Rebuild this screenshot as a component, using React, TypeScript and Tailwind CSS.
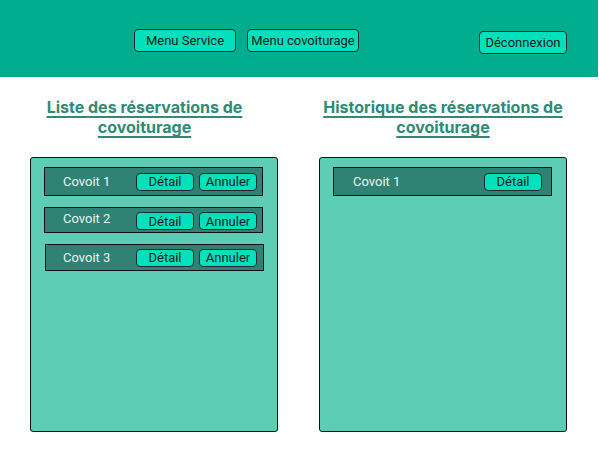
import React from 'react'

const font = { fontFamily: 'Inter, "Liberation Sans", sans-serif' }
const small = { fontFamily: 'Roboto, "Liberation Sans", sans-serif' }

function HeaderButton({ label, width }: { label: string; width: string }) {
  return (
    <button
      style={small}
      className={`${width} h-[23px] whitespace-nowrap rounded-[4px] border border-[#1b2b27] bg-[#00e0bb] text-[13px] leading-none text-[#10211d]`}
    >
      {label}
    </button>
  )
}

function SmallButton({ label }: { label: string }) {
  return (
    <button
      style={small}
      className="h-[18px] w-[58px] whitespace-nowrap rounded-[4px] border border-[#1b2b27] bg-[#00e0bb] text-[13px] leading-none text-[#10211d]"
    >
      {label}
    </button>
  )
}

function Row({ label, cancel, className }: { label: string; cancel: boolean; className: string }) {
  return (
    <div className={`flex items-center border border-[#111] bg-[#2f8274] ${className}`}>
      <span style={small} className="w-[72px] text-[13px] text-[#e6f5f1]">{label}</span>
      <div className="flex gap-[5px]">
        <SmallButton label="Détail" />
        {cancel && <SmallButton label="Annuler" />}
      </div>
    </div>
  )
}

export default function App() {
  return (
    <div className="h-[457px] w-[599px] bg-white" style={font}>
      {/* Header */}
      <header className="flex h-[77px] w-[598px] items-start bg-[#00ae8f] pt-[29px]">
        <div className="ml-[134px] flex gap-[11px]">
          <HeaderButton label="Menu Service" width="w-[102px]" />
          <HeaderButton label="Menu covoiturage" width="w-[112px]" />
        </div>
        <div className="ml-[120px]">
          <HeaderButton label="Déconnexion" width="w-[88px]" />
        </div>
      </header>

      <main className="flex gap-[41px] pl-[30px] pt-[20px]">
        {/* Reservations */}
        <section className="w-[248px]">
          <h2 className="pr-[19px] text-center text-[16px] font-bold leading-[20px] text-[#2f8a76] underline decoration-[1.5px] underline-offset-[3px]">
            Liste des réservations de
            <br />
            covoiturage
          </h2>
          <div className="mt-[20px] h-[275px] rounded-[3px] border border-[#111] bg-[#5ecdb6] pt-[9px]">
            <Row label="Covoit 1" cancel className="ml-[13px] h-[29px] w-[219px] pl-[18px] [&>div]:ml-[1px]" />
            <Row label="Covoit 2" cancel className="ml-[13px] mt-[11px] h-[26px] w-[219px] pl-[18px] [&>span]:-mt-[2px] [&>div]:ml-[1px] [&>div]:mt-[2px]" />
            <Row label="Covoit 3" cancel className="ml-[14px] mt-[11px] h-[27px] w-[219px] pl-[17px] [&>div]:ml-[1px]" />
          </div>
        </section>

        {/* History */}
        <section className="w-[248px]">
          <h2 className="text-center text-[16px] font-bold leading-[20px] text-[#2f8a76] underline decoration-[1.5px] underline-offset-[3px]">
            Historique des réservations de
            <br />
            covoiturage
          </h2>
          <div className="mt-[20px] h-[275px] rounded-[3px] border border-[#111] bg-[#5ecdb6] pt-[9px]">
            <div className="ml-[13px] flex h-[29px] w-[219px] items-center border border-[#111] bg-[#2f8274]">
              <span style={small} className="ml-[19px] w-[131px] text-[13px] text-[#e6f5f1]">Covoit 1</span>
              <SmallButton label="Détail" />
            </div>
          </div>
        </section>
      </main>
    </div>
  )
}
